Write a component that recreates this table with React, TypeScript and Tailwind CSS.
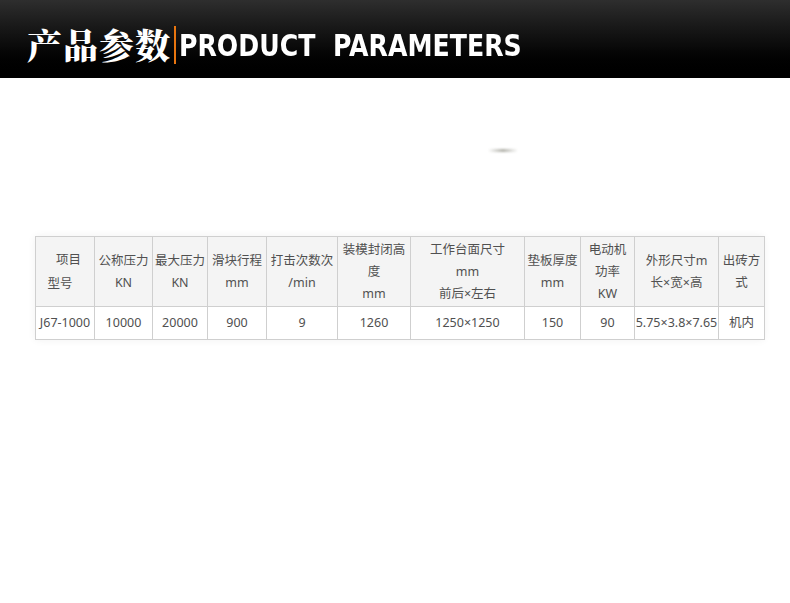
import React from "react";

const cols = [59, 58, 55, 59, 71, 73, 114, 56, 54, 84, 46];

const head: React.ReactNode[] = [
  <div className="leading-[24px]">
    <div className="pl-[7px]">项目</div>
    <div className="pr-[10px]">型号</div>
  </div>,
  <div>公称压力<br />KN</div>,
  <div>最大压力<br />KN</div>,
  <div>滑块行程<br />mm</div>,
  <div>打击次数次<br />/min</div>,
  <div>装模封闭高<br />度<br />mm</div>,
  <div>工作台面尺寸<br />mm<br />前后×左右</div>,
  <div>垫板厚度<br />mm</div>,
  <div>电动机<br />功率<br />KW</div>,
  <div>外形尺寸m<br />长×宽×高</div>,
  <div>出砖方<br />式</div>,
];

const row = ["J67-1000", "10000", "20000", "900", "9", "1260", "1250×1250", "150", "90", "5.75×3.8×7.65", "机内"];

export default function App() {
  return (
    <div className="w-[790px] h-[603px] bg-white overflow-hidden">
      <div className="h-[78px] bg-gradient-to-b from-[#2e2e2e] via-[#0a0a0a] via-60% to-black flex items-center pl-[27px] pt-[11px]">
        <span
          className="text-white text-[35px] leading-none tracking-[1px]"
          style={{ fontFamily: '"Noto Serif CJK SC", "Noto Sans CJK SC", serif', fontWeight: 900 }}
        >
          产品参数
        </span>
        <span className="w-[2px] h-[38px] bg-[#e8750f] ml-[3px] mr-[3px]" />
        <span
          className="text-white text-[30px] font-bold leading-none whitespace-pre tracking-[0px] mt-[3px]"
          style={{ fontFamily: '"DejaVu Sans", sans-serif', transform: "scaleX(0.84)", transformOrigin: "left center", display: "inline-block" }}
        >
          PRODUCT  PARAMETERS
        </span>
      </div>
      <div className="h-[71px]" />
      <div className="ml-[488px] w-[30px] h-[3px] rounded-full bg-gradient-to-r from-transparent via-[#b0b0a8] to-transparent blur-[0.8px]" />
      <div className="h-[84px]" />
      <div className="ml-[35px] w-[729px] shadow-[0_0_8px_rgba(0,0,0,0.06)]">
        <table
          className="border-collapse table-fixed w-[729px] text-[12.5px] text-[#505050]"
          style={{ fontFamily: '"Noto Sans", "Noto Sans CJK SC", sans-serif' }}
        >
          <colgroup>
            {cols.map((w, i) => (
              <col key={i} style={{ width: w }} />
            ))}
          </colgroup>
          <tbody>
            <tr className="h-[70px] bg-[#f4f4f4]">
              {head.map((h, i) => (
                <td key={i} className="border border-[#cfcfcf] text-center align-middle leading-[22px] p-0 whitespace-nowrap">
                  {h}
                </td>
              ))}
            </tr>
            <tr className="h-[33px] bg-white">
              {row.map((c, i) => (
                <td key={i} className="border border-[#cfcfcf] text-center align-middle p-0 whitespace-nowrap">
                  {c}
                </td>
              ))}
            </tr>
          </tbody>
        </table>
      </div>
    </div>
  );
}
